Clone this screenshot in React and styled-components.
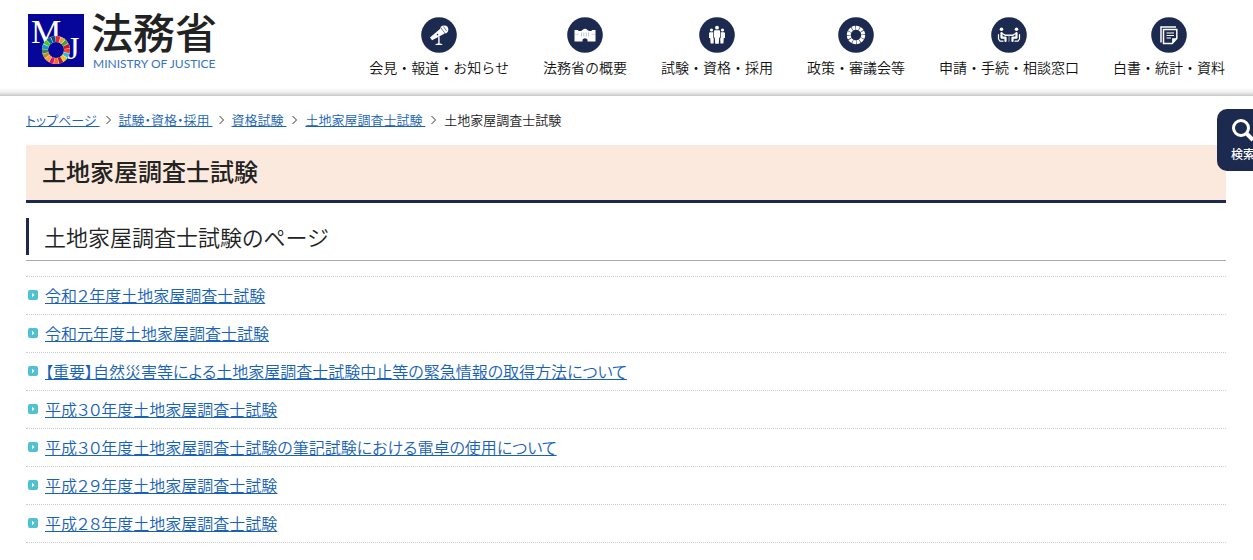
import React from 'react';
import styled, { createGlobalStyle } from 'styled-components';

const GlobalStyle = createGlobalStyle`
	* { box-sizing: border-box; }
	body {
		margin: 0;
		background: #fff;
		color: #222;
		font-family: "Noto Sans CJK JP", sans-serif;
		font-size: 16px;
		overflow: hidden;
	}
	h1, h2, p, ul, ol { margin: 0; padding: 0; }
	ul, ol { list-style: none; }
	a { color: #1762b8; }
`;

const Header = styled.header`
	display: flex;
	justify-content: space-between;
	align-items: flex-start;
	height: 96px;
	padding: 0 28px;
	background: linear-gradient(to top, #c8c8c8, #f0f0f0 4px, #fff 8px);
`;

const LogoLink = styled.a`
	display: flex;
	gap: 7px;
	padding-top: 14px;
	color: #222;
	text-decoration: none;
`;

const LogoText = styled.span`
	display: flex;
	flex-direction: column;
`;

const LogoName = styled.span`
	font-size: 42px;
	line-height: 34px;
	font-weight: 500;
`;

const LogoSub = styled.span`
	margin-top: 8px;
	padding-left: 2px;
	color: #3673bf;
	font-family: Lato, sans-serif;
	font-size: 12px;
	line-height: 16px;
`;

const GlobalNav = styled.ul`
	display: flex;
	gap: 34px;
	padding-top: 17px;
`;

const NavLink = styled.a`
	display: flex;
	flex-direction: column;
	align-items: center;
	gap: 4px;
	color: #111;
	font-size: 14px;
	font-weight: 350;
	line-height: 20px;
	text-decoration: none;
	white-space: nowrap;
`;

const Main = styled.main`
	padding: 0 27px 0 26px;
`;

const Breadcrumb = styled.ol`
	display: flex;
	align-items: center;
	height: 49px;
	padding-bottom: 2px;
	font-size: 13px;
	font-weight: 350;
	font-feature-settings: "palt";
	white-space: pre;
`;

const Crumb = styled.li`
	display: flex;
	align-items: center;
	svg { margin: 0 7px 0 5px; }
`;

const PageTitle = styled.h1`
	padding: 0 16px 3px;
	border-bottom: 3px solid #1d2a50;
	background: #fbe9dd;
	font-size: 24px;
	font-weight: 500;
	line-height: 52px;
`;

const SectionTitle = styled.div`
	margin-top: 15px;
	padding-bottom: 5px;
	border-bottom: 1px solid #aaa;
	h2 {
		padding-left: 15px;
		border-left: 3px solid #1d2a50;
		font-size: 22px;
		font-weight: 350;
		line-height: 37px;
		font-feature-settings: "palt";
	}
`;

const LinkList = styled.ul`
	margin-top: 15px;
	border-top: 1px dotted #ccc;
`;

const LinkItem = styled.li`
	display: flex;
	align-items: center;
	gap: 7px;
	height: 38px;
	padding: 0 0 2px 2px;
	border-bottom: 1px dotted #ccc;
	line-height: 24px;
	font-weight: 350;
	font-feature-settings: "palt";
`;

const SearchButton = styled.button`
	position: fixed;
	top: 109px;
	right: -16px;
	display: flex;
	flex-direction: column;
	align-items: center;
	justify-content: center;
	gap: 4px;
	width: 52px;
	height: 62px;
	padding: 0;
	border: 0;
	border-radius: 10px;
	background: #1d2a50;
	color: #fff;
	font-family: inherit;
	font-size: 12px;
	font-weight: 500;
	line-height: 16px;
`;

const SDG_COLORS = [
	'#e5243b', '#dda63a', '#4c9f38', '#c5192d', '#ff3a21', '#26bde2',
	'#fcc30b', '#a21942', '#fd6925', '#dd1367', '#fd9d24', '#bf8b2e',
	'#3f7e44', '#0a97d9', '#56c02b', '#00689d', '#19486a',
];

const LogoMark = () => (
	<svg width="56" height="53" viewBox="0 0 56 53" aria-hidden="true">
		<rect width="56" height="53" fill="#06069a" />
		<g fill="#fff" fontFamily="Liberation Serif, serif">
			<text x="3" y="29" fontSize="34">M</text>
			<text x="39" y="45" fontSize="32">J</text>
		</g>
		<circle cx="28" cy="36" r="14" fill="#fff" />
		<circle cx="28" cy="36" r="8" fill="#06069a" />
		{SDG_COLORS.map((color, i) => (
			<circle
				key={color}
				cx="28"
				cy="36"
				r="11"
				fill="none"
				stroke={color}
				strokeWidth="6"
				pathLength="170"
				strokeDasharray="9 161"
				transform={`rotate(${(i * 360) / 17 - 90} 28 36)`}
			/>
		))}
	</svg>
);

const Badge = ({ children }) => (
	<svg width="36" height="36" viewBox="0 0 36 36" aria-hidden="true">
		<circle cx="18" cy="18" r="17.8" fill="#1d2a50" />
		{children}
	</svg>
);

const MicIcon = () => (
	<Badge>
		<g fill="#fff">
			<path d="M9 20.500 19.500 11.500 23.300 16.800 11 23.200Z" />
			<circle cx="23.200" cy="12.500" r="4.100" />
			<path d="M17.200 19.500h1.400v7h-1.400zM14 27.900q1-1.600 3.900-1.600t3.900 1.600z" />
		</g>
		<path d="M19.800 10.500 24 16.600M22.500 9.500 25.600 14" stroke="#1d2a50" strokeWidth="0.600" />
		<circle cx="16.500" cy="17.600" r="0.800" fill="#1d2a50" />
	</Badge>
);

const BuildingIcon = () => (
	<Badge>
		<path d="M7.500 13h3.800v1h3q.2-.8 1.500-1 .5-1.200 2.200-1.200t2.200 1.200q1.300.2 1.500 1h3v-1h3.800v11.600h-8v-1.800q-.5-1.600-2.500-1.600t-2.500 1.600v1.800h-8z" fill="#fff" />
		<path d="M7.500 17.300h4M24.500 17.300h4" stroke="#aeb4c6" strokeWidth="0.600" />
		<path d="M14.500 15.500v4M16.800 15.500v4M19.200 15.500v4M21.500 15.500v4" stroke="#aeb4c6" strokeWidth="0.800" />
	</Badge>
);

const PeopleIcon = () => (
	<Badge>
		<g fill="#fff">
			<circle cx="18" cy="10.700" r="1.900" />
			<circle cx="12.500" cy="13" r="1.600" />
			<circle cx="23.500" cy="13" r="1.600" />
			<path d="M15.400 13.300h5.200l.5 1v6.200h-.9l-.4 6.200h-3.600l-.4-6.200h-.9v-6.200z" />
			<path d="M10.800 15.300h3.400v5.500l.6.800-.2 4.900h-3l-.4-5.500H10v-5z" />
			<path d="M25.200 15.300h-3.400v5.500l-.6.800.2 4.900h3l.4-5.500H26v-5z" />
		</g>
	</Badge>
);

const RingIcon = () => (
	<Badge>
		<circle cx="18" cy="18" r="7.200" fill="none" stroke="#fff" strokeWidth="4" pathLength="120" strokeDasharray="8.600 1.400" />
	</Badge>
);

const MeetingIcon = () => (
	<Badge>
		<g fill="none" stroke="#fff" strokeLinecap="round" strokeLinejoin="round">
			<path d="M10.500 16v4.600h4v3.400" strokeWidth="2.200" />
			<path d="M25.500 16v4.600h-4v3.400" strokeWidth="2.200" />
			<path d="M7.500 17.500v4.500l1.500 2.200h3M28.500 17.500v4.500L27 24.200h-3M11 16.400l2.500 1.300M25 16.400l-2.500 1.300" strokeWidth="1.200" />
			<path d="M14 18.200h8" strokeWidth="1.400" />
			<path d="M18 19v5.500" stroke="#9ba2b8" />
		</g>
		<circle cx="10.500" cy="12.200" r="1.800" fill="#fff" />
		<circle cx="25.500" cy="12.200" r="1.800" fill="#fff" />
	</Badge>
);

const PaperIcon = () => (
	<Badge>
		<g fill="none" stroke="#fff" strokeWidth="1.500">
			<path d="M25 10H10v15.500" />
			<path d="M12.500 12.500h13.300v9l-4.600 4.900h-8.700z" />
			<path d="M15.500 16h7.500M15.500 18.500h7.500M15.500 21h4.500" strokeWidth="1.200" />
		</g>
		<path d="M25.800 21.300h-4.700v5z" fill="#fff" />
	</Badge>
);

const Chevron = () => (
	<svg width="7" height="10" viewBox="0 0 7 10" aria-hidden="true">
		<path d="M1.500 1 5.500 5 1.500 9" fill="none" stroke="#333" />
	</svg>
);

const Bullet = () => (
	<svg width="10" height="10" viewBox="0 0 10 10" aria-hidden="true">
		<rect width="10" height="10" rx="2" fill="#4fc1d3" />
		<path d="M4 2.800v4.400L6.500 5z" fill="#fff" />
	</svg>
);

const navItems = [
	{ label: '会見・報道・お知らせ', Icon: MicIcon },
	{ label: '法務省の概要', Icon: BuildingIcon },
	{ label: '試験・資格・採用', Icon: PeopleIcon },
	{ label: '政策・審議会等', Icon: RingIcon },
	{ label: '申請・手続・相談窓口', Icon: MeetingIcon },
	{ label: '白書・統計・資料', Icon: PaperIcon },
];

const crumbs = ['トップページ', '試験・資格・採用', '資格試験', '土地家屋調査士試験'];

const links = [
	'令和２年度土地家屋調査士試験',
	'令和元年度土地家屋調査士試験',
	'【重要】自然災害等による土地家屋調査士試験中止等の緊急情報の取得方法について',
	'平成３０年度土地家屋調査士試験',
	'平成３０年度土地家屋調査士試験の筆記試験における電卓の使用について',
	'平成２９年度土地家屋調査士試験',
	'平成２８年度土地家屋調査士試験',
];

export default function App() {
	return (
		<>
			<GlobalStyle />
			<Header>
				<LogoLink href="#">
					<LogoMark />
					<LogoText>
						<LogoName>法務省</LogoName>
						<LogoSub>MINISTRY OF JUSTICE</LogoSub>
					</LogoText>
				</LogoLink>
				<nav>
					<GlobalNav>
						{navItems.map(({ label, Icon }) => (
							<li key={label}>
								<NavLink href="#"><Icon />{label}</NavLink>
							</li>
						))}
					</GlobalNav>
				</nav>
			</Header>
			<Main>
				<Breadcrumb>
					{crumbs.map((crumb) => (
						<Crumb key={crumb}><a href="#">{crumb + ' '}</a><Chevron /></Crumb>
					))}
					<Crumb>土地家屋調査士試験</Crumb>
				</Breadcrumb>
				<PageTitle>土地家屋調査士試験</PageTitle>
				<SectionTitle>
					<h2>土地家屋調査士試験のページ</h2>
				</SectionTitle>
				<LinkList>
					{links.map((link) => (
						<LinkItem key={link}><Bullet /><a href="#">{link}</a></LinkItem>
					))}
				</LinkList>
			</Main>
			<SearchButton type="button">
				<svg width="24" height="24" viewBox="0 0 24 24" aria-hidden="true">
					<circle cx="10" cy="10" r="7.500" fill="none" stroke="#fff" strokeWidth="3" />
					<path d="M15.500 15.500 22 22" stroke="#fff" strokeWidth="4" />
				</svg>
				検索
			</SearchButton>
		</>
	);
}
